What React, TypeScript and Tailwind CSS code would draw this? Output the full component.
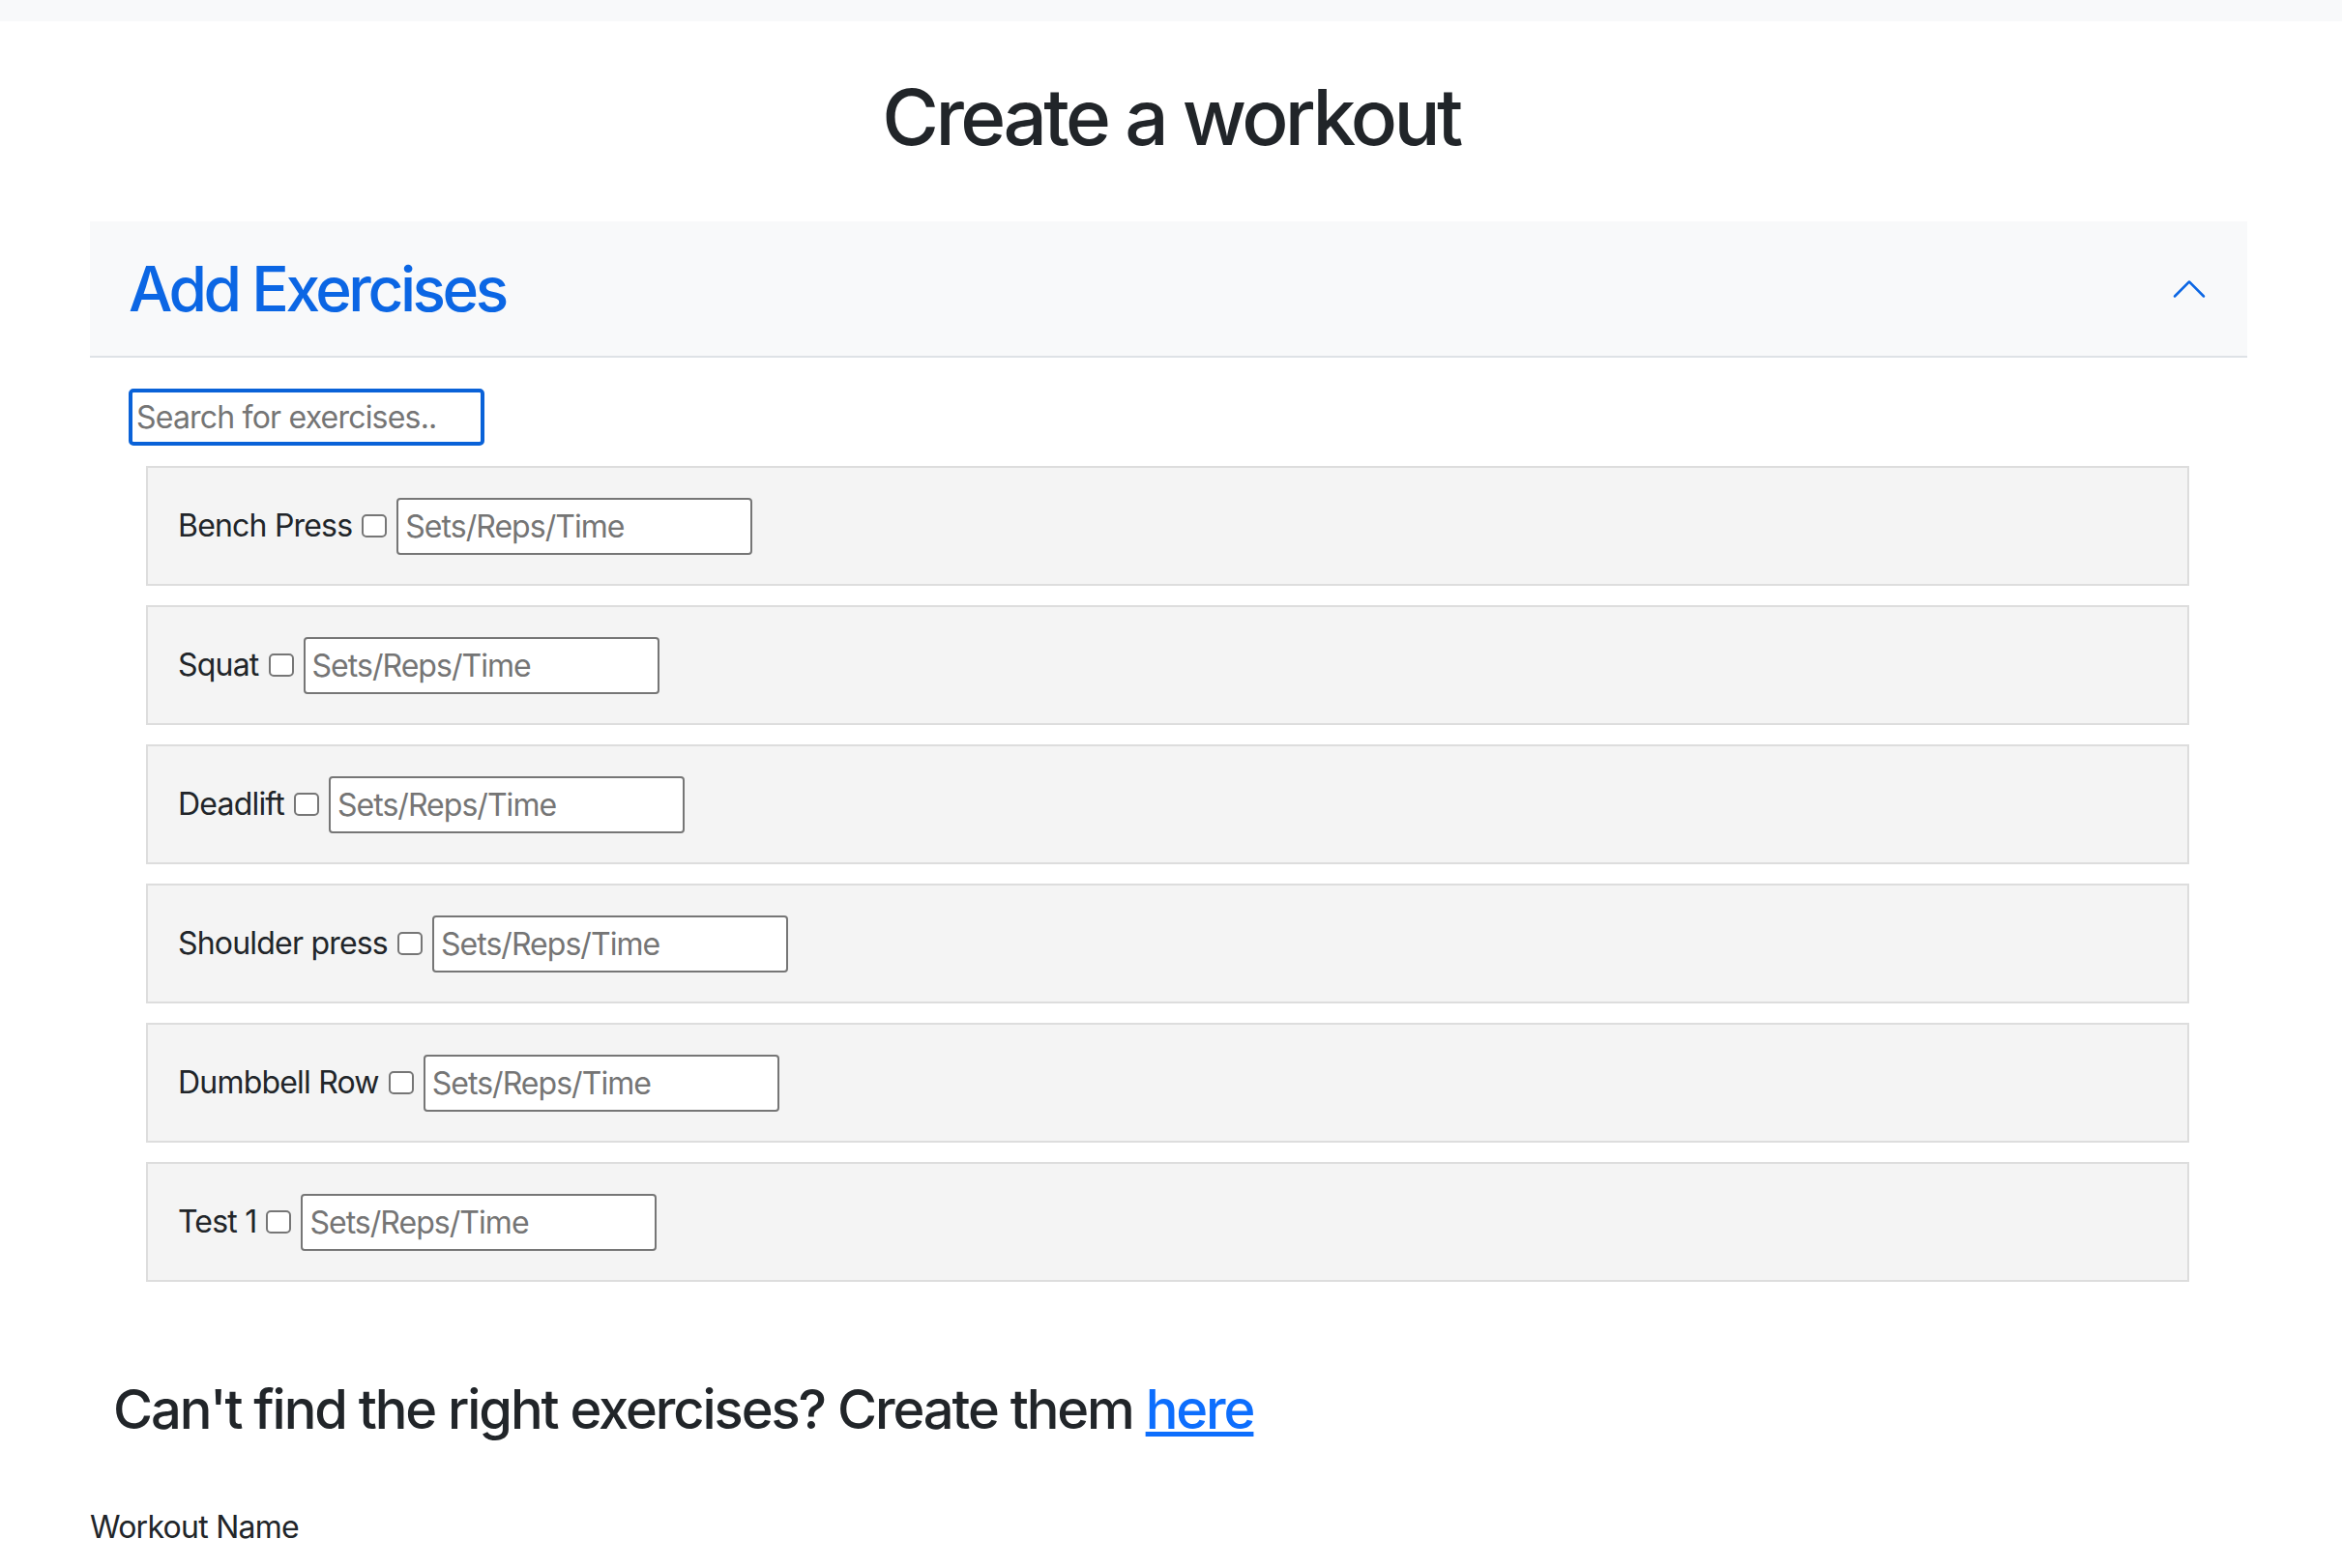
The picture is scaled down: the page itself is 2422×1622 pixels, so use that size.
import React from "react";

const exercises = [
  "Bench Press",
  "Squat",
  "Deadlift",
  "Shoulder press",
  "Dumbbell Row",
  "Test 1",
];

const ChevronUp: React.FC = () => (
  <svg
    viewBox="0 0 16 16"
    className="w-[40px] h-[40px] rotate-180"
    fill="#0b66e4"
  >
    <path
      fillRule="evenodd"
      d="M1.646 4.646a.5.5 0 0 1 .708 0L8 10.293l5.646-5.647a.5.5 0 0 1 .708.708l-6 6a.5.5 0 0 1-.708 0l-6-6a.5.5 0 0 1 0-.708z"
    />
  </svg>
);

const ExerciseCard: React.FC<{ name: string }> = ({ name }) => (
  <li className="ml-[18px] mr-[20px] h-[124px] border-2 border-[#dddddd] bg-[#f4f4f4] pl-[31px] flex items-center gap-[10px] text-[32px] leading-[48px] tracking-[-0.025em]">
    <span>{name}</span>
    <input
      type="checkbox"
      className="appearance-none w-[26px] h-[24px] bg-white border-2 border-[#767676] rounded-[5px]"
    />
    <input
      type="text"
      placeholder="Sets/Reps/Time"
      className="w-[368px] h-[59px] bg-white border-2 border-[#767676] rounded-[4px] px-[7px] text-[32px] tracking-[-0.03em] placeholder:text-[#757575] outline-none"
    />
  </li>
);

export default function App() {
  return (
    <div className="min-h-screen bg-white font-['Inter',sans-serif] text-[#212529]">
      <div className="h-[22px] bg-[#f8f9fa]" />

      <h1 className="mt-[51px] text-center text-[80px] leading-[96px] font-medium tracking-[-0.045em]">
        Create a workout
      </h1>

      <div className="ml-[93px] w-[2231px] mt-[60px]">
        <button className="w-full h-[141px] flex items-center justify-between bg-[#f8f9fa] border-b-2 border-[#dee2e6] px-[40px]">
          <h2 className="text-[64px] leading-[77px] font-medium text-[#0b66e4] tracking-[-0.054em]">
            Add Exercises
          </h2>
          <ChevronUp />
        </button>

        <div className="pt-[32px] px-[40px]">
          <input
            type="text"
            autoFocus
            placeholder="Search for exercises.."
            className="block w-[368px] h-[59px] border-[4px] border-[#0a62d8] rounded-[5px] px-[4px] text-[32px] tracking-[-0.025em] placeholder:text-[#757575] outline-none caret-black"
          />
          <ul className="mt-[21px] flex flex-col gap-[20px]">
            {exercises.map((e) => (
              <ExerciseCard key={e} name={e} />
            ))}
          </ul>
        </div>
      </div>

      <h3 className="ml-[117px] mt-[99px] text-[56px] leading-[67px] font-medium tracking-[-0.037em]">
        Can't find the right exercises? Create them{" "}
        <a href="#" className="text-[#0d6efd] underline">
          here
        </a>
      </h3>

      <label className="block ml-[93px] mt-[64px] text-[32px] leading-[48px] tracking-[-0.023em]">
        Workout Name
      </label>
    </div>
  );
}
